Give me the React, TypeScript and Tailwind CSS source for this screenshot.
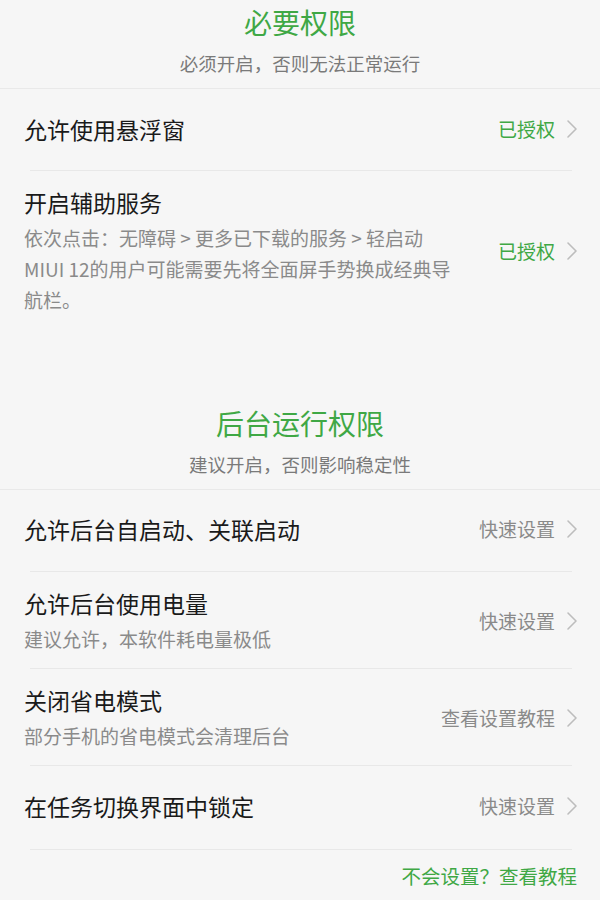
import React from "react";

const font = { fontFamily: '"Noto Sans CJK SC", "Noto Sans", sans-serif' };

function Chevron() {
  return (
    <svg width="12" height="20" viewBox="0 0 12 20" className="shrink-0">
      <polyline points="2,2 10,10 2,18" fill="none" stroke="#bdbdbd" strokeWidth="1.6" strokeLinejoin="round" strokeLinecap="round" />
    </svg>
  );
}

function SectionHeader({ title, sub }: { title: string; sub: string }) {
  return (
    <div className="flex flex-col items-center pb-[11px] border-b border-[#e9e9e9]">
      <div className="text-[28px] leading-[44px] font-normal text-[#3fa845]">{title}</div>
      <div className="mt-[5px] text-[18.5px] leading-[28px] text-[#7a7a7a]">{sub}</div>
    </div>
  );
}

function Divider() {
  return <div className="ml-[30px] mr-[28px] h-px bg-[#e8e8e8]" />;
}

type RowProps = {
  title: string;
  lines?: string[];
  action: string;
  granted?: boolean;
};

function Row({ title, lines, action, granted }: RowProps) {
  const actionColor = granted ? "text-[#3fa845]" : "text-[#8a8a8a]";
  return (
    <div className="flex items-center pl-[24px] pr-[22px]">
      <div className="flex-1 min-w-0">
        <div className="text-[23px] leading-[32px] text-[#1a1a1a]">{title}</div>
        {lines && (
          <div className="mt-[4px] text-[19px] leading-[31px] text-[#8a8a8a]">
            {lines.map((l) => (
              <div key={l}>{l}</div>
            ))}
          </div>
        )}
      </div>
      <div className="flex items-center gap-[11px] shrink-0">
        <span className={`text-[19px] leading-[28px] ${actionColor}`}>{action}</span>
        <Chevron />
      </div>
    </div>
  );
}

export default function App() {
  return (
    <div className="w-[600px] h-[900px] overflow-hidden bg-[#f6f6f6]" style={font}>
      <SectionHeader title="必要权限" sub="必须开启，否则无法正常运行" />

      <div className="h-[81px] pb-[2px] flex flex-col justify-center">
        <Row title="允许使用悬浮窗" action="已授权" granted />
      </div>
      <Divider />
      <div className="pt-[15px] h-[230px]">
        <Row
          title="开启辅助服务"
          lines={[
            "依次点击：无障碍 > 更多已下载的服务 > 轻启动",
            "MIUI 12的用户可能需要先将全面屏手势换成经典导",
            "航栏。",
          ]}
          action="已授权"
          granted
        />
      </div>

      <SectionHeader title="后台运行权限" sub="建议开启，否则影响稳定性" />

      <div className="h-[81px] pb-[3px] flex flex-col justify-center">
        <Row title="允许后台自启动、关联启动" action="快速设置" />
      </div>
      <Divider />
      <div className="pt-[15px] pb-[14px]">
        <Row title="允许后台使用电量" lines={["建议允许，本软件耗电量极低"]} action="快速设置" />
      </div>
      <Divider />
      <div className="pt-[15px] pb-[14px]">
        <Row title="关闭省电模式" lines={["部分手机的省电模式会清理后台"]} action="查看设置教程" />
      </div>
      <Divider />
      <div className="h-[83px] pb-[4px] flex flex-col justify-center">
        <Row title="在任务切换界面中锁定" action="快速设置" />
      </div>
      <Divider />
      <div className="pt-[12px] pr-[23px] flex justify-end">
        <span className="text-[19.5px] leading-[28px] text-[#3fa845]">不会设置？查看教程</span>
      </div>
    </div>
  );
}
